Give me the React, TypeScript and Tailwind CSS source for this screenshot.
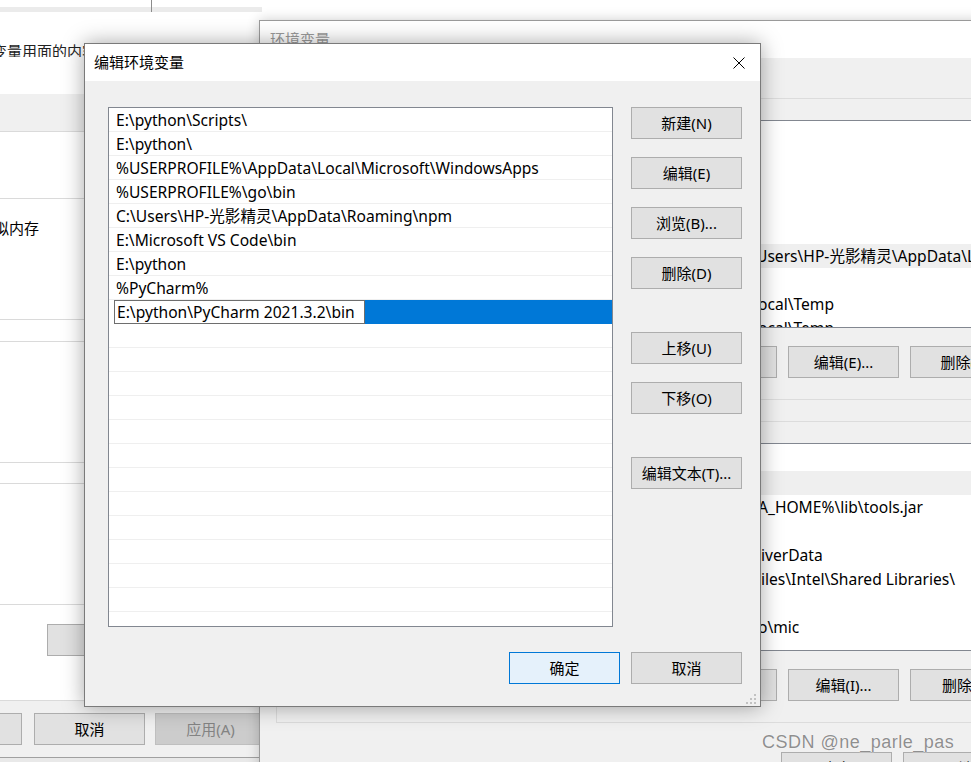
import React from "react";

const F = "font-['Noto_Sans','Noto_Sans_CJK_SC',sans-serif]";

function Btn({ label, className = "" }: { label: string; className?: string }) {
  return (
    <div
      className={`flex h-[32px] w-[111px] shrink-0 items-center justify-center border border-[#adadad] bg-[#e1e1e1] text-[15px] leading-none text-black ${className}`}
    >
      {label}
    </div>
  );
}

type Row = { text?: string; pad?: string; hi?: boolean };

function BgList({ rows }: { rows: Row[] }) {
  return (
    <div className="ml-[13px] h-[208px] overflow-hidden border border-[#828790] bg-white">
      <div className="h-[27px]" />
      {rows.map((r, i) => (
        <div
          key={i}
          className={`h-[24px] whitespace-nowrap text-[15.6px] leading-[24px] text-black ${r.hi ? "bg-[#efefef]" : ""} ${r.pad ?? ""}`}
        >
          {r.text ?? ""}
        </div>
      ))}
    </div>
  );
}

function Group({ rows, buttons, className = "" }: { rows: Row[]; buttons: string[]; className?: string }) {
  return (
    <div className={`h-[302px] border-y border-l border-[#dcdcdc] ${className}`}>
      <div className="pt-[21px]">
        <BgList rows={rows} />
      </div>
      <div className="ml-[389px] mt-[18px] flex gap-[11px]">
        {buttons.map((b, i) => (
          <Btn key={i} label={b} />
        ))}
      </div>
    </div>
  );
}

const pathRows = [
  "E:\\python\\Scripts\\",
  "E:\\python\\",
  "%USERPROFILE%\\AppData\\Local\\Microsoft\\WindowsApps",
  "%USERPROFILE%\\go\\bin",
  "C:\\Users\\HP-光影精灵\\AppData\\Roaming\\npm",
  "E:\\Microsoft VS Code\\bin",
  "E:\\python",
  "%PyCharm%",
];

function LeftWindow() {
  return (
    <div className="absolute left-0 top-0 flex h-[762px] w-[262px] flex-col overflow-hidden bg-white">
      {/* top strip */}
      <div className="flex h-[12px]">
        <div className="flex w-[151px] flex-col">
          <div className="h-[7px] bg-white" />
          <div className="h-[5px] bg-[#ebebeb]" />
        </div>
        <div className="w-[1px] bg-[#8c8c8c]" />
        <div className="flex flex-1 flex-col">
          <div className="h-[7px] bg-white" />
          <div className="h-[5px] bg-[#ebebeb]" />
        </div>
      </div>
      <div className="h-[82px] bg-white">
        <div className="ml-[-8px] mt-[29px] h-[16px] overflow-hidden whitespace-nowrap text-[15px] leading-[20px] text-[#222]">
          变量用面的内容
        </div>
      </div>
      <div className="h-[37px] bg-[#f0f0f0]" />
      <div className="h-[1px] bg-[#dadada]" />
      <div className="h-[66px] bg-white" />
      <div className="h-[1px] bg-[#dadada]" />
      <div className="h-[120px] bg-white">
        <div className="ml-[-6px] mt-[19px] whitespace-nowrap text-[15px] leading-[20px] text-black">拟内存</div>
      </div>
      <div className="h-[1px] bg-[#dadada]" />
      <div className="h-[21px] bg-white" />
      <div className="h-[1px] bg-[#dadada]" />
      <div className="h-[120px] bg-white" />
      <div className="h-[1px] bg-[#dadada]" />
      <div className="h-[20px] bg-white" />
      <div className="h-[1px] bg-[#dadada]" />
      <div className="h-[120px] bg-white" />
      <div className="h-[1px] bg-[#dadada]" />
      <div className="h-[95px] bg-white pt-[19px]">
        <Btn label="" className="ml-[47px]" />
      </div>
      <div className="h-[1px] bg-[#dadada]" />
      <div className="flex h-[56px] items-start bg-[#f0f0f0] pt-[12px]">
        <Btn label="" className="ml-[-89px]" />
        <Btn label="取消" className="ml-[12px]" />
        <div className="ml-[10px] flex h-[32px] w-[111px] shrink-0 items-center justify-center border border-[#bfbfbf] bg-[#cccccc] text-[15px] leading-none text-[#838383]">
          应用(A)
        </div>
      </div>
      <div className="h-[1px] bg-[#a0a0a0]" />
      <div className="flex-1 bg-[#e9e9e9]" />
    </div>
  );
}

function EnvWindow() {
  const list1: Row[] = [
    {},
    {},
    {},
    {},
    { text: "Users\\HP-光影精灵\\AppData\\Local\\Microsoft\\WindowsApps", pad: "pl-[465px]", hi: true },
    {},
    { text: "ocal\\Temp", pad: "pl-[467px]" },
    { text: "ocal\\Temp", pad: "pl-[467px]" },
  ];
  const list2: Row[] = [
    { hi: true },
    { text: "A_HOME%\\lib\\tools.jar", pad: "pl-[467px]" },
    {},
    { text: "iverData", pad: "pl-[470px]" },
    { text: "iles\\Intel\\Shared Libraries\\", pad: "pl-[470px]" },
    {},
    { text: "o\\mic", pad: "pl-[467px]" },
  ];
  return (
    <div className="absolute left-[259px] top-[20px] flex h-[800px] w-[760px] flex-col border-l border-t border-[#9a9a9a] bg-[#f0f0f0] shadow-[0_0_12px_rgba(0,0,0,0.2)]">
      <div className="flex h-[37px] items-center bg-white pl-[10px] text-[15px] text-[#9a9a9a]">环境变量</div>
      <div className="flex flex-col pl-[16px]">
        <Group className="mt-[40px]" rows={list1} buttons={["", "编辑(E)...", "删除(D)"]} />
        <Group className="mt-[21px]" rows={list2} buttons={["", "编辑(I)...", "删除(L)"]} />
        <div className="ml-[505px] mt-[29px] flex gap-[11px]">
          <Btn label="确定" />
          <Btn label="取消" />
        </div>
      </div>
    </div>
  );
}

function EditDialog() {
  return (
    <div className="absolute left-[84px] top-[43px] flex h-[664px] w-[677px] flex-col border border-[#7a7a7a] bg-[#f0f0f0] shadow-[0_0_20px_rgba(0,0,0,0.35)]">
      <div className="flex h-[37px] shrink-0 items-center justify-between bg-white pl-[9px] pr-[14px]">
        <span className="text-[15px] text-black">编辑环境变量</span>
        <svg width="12" height="12" viewBox="0 0 12 12" className="mr-[1px]">
          <path d="M0.5 0.5 L11.5 11.5 M11.5 0.5 L0.5 11.5" stroke="#000" strokeWidth="1" fill="none" />
        </svg>
      </div>
      <div className="flex flex-1 flex-col">
        <div className="flex pl-[23px] pt-[26px]">
          <div className="h-[520px] w-[505px] overflow-hidden border border-[#828790] bg-white">
            {pathRows.map((t) => (
              <div
                key={t}
                className="h-[24px] whitespace-nowrap border-b border-[#efefef] pl-[7px] text-[15.6px] leading-[24px] text-black"
              >
                {t}
              </div>
            ))}
            <div className="flex h-[24px]">
              <div className="w-[5px] bg-white" />
              <div className="w-[251px] whitespace-nowrap border border-[#6e6e6e] bg-white pl-[2px] text-[15.6px] leading-[22px] text-black">
                E:\python\PyCharm 2021.3.2\bin
              </div>
              <div className="flex-1 bg-[#0078d7]" />
            </div>
            {Array.from({ length: 13 }).map((_, i) => (
              <div key={i} className="h-[24px] border-b border-[#efefef]" />
            ))}
          </div>
          <div className="ml-[18px] flex flex-col">
            <Btn label="新建(N)" />
            <Btn label="编辑(E)" className="mt-[18px]" />
            <Btn label="浏览(B)..." className="mt-[18px]" />
            <Btn label="删除(D)" className="mt-[18px]" />
            <Btn label="上移(U)" className="mt-[43px]" />
            <Btn label="下移(O)" className="mt-[18px]" />
            <Btn label="编辑文本(T)..." className="mt-[43px]" />
          </div>
        </div>
        <div className="mt-[25px] flex justify-end gap-[11px] pr-[18px]">
          <div className="flex h-[32px] w-[111px] items-center justify-center border border-[#0078d7] bg-[#e5f1fb] text-[15px] leading-none text-black">
            确定
          </div>
          <Btn label="取消" />
        </div>
      </div>
      <svg className="absolute bottom-[1px] right-[3px]" width="11" height="11" viewBox="0 0 11 11">
        <rect x="8" y="0" width="2" height="2" fill="#c2c2c2" />
        <rect x="4" y="4" width="2" height="2" fill="#c2c2c2" />
        <rect x="8" y="4" width="2" height="2" fill="#c2c2c2" />
        <rect x="0" y="8" width="2" height="2" fill="#c2c2c2" />
        <rect x="4" y="8" width="2" height="2" fill="#c2c2c2" />
        <rect x="8" y="8" width="2" height="2" fill="#c2c2c2" />
      </svg>
    </div>
  );
}

export default function App() {
  return (
    <div className={`relative h-[762px] w-[971px] overflow-hidden bg-white ${F}`}>
      <LeftWindow />
      <EnvWindow />
      <EditDialog />
      <div className="absolute left-[762px] top-[730px] whitespace-nowrap font-['Liberation_Sans',Arial,sans-serif] text-[18px] leading-[24px] tracking-[0.5px] text-[#8f8f8f] [text-shadow:0_0_1px_#fff,0_0_1px_#fff]">
        CSDN @ne_parle_pas
      </div>
    </div>
  );
}
